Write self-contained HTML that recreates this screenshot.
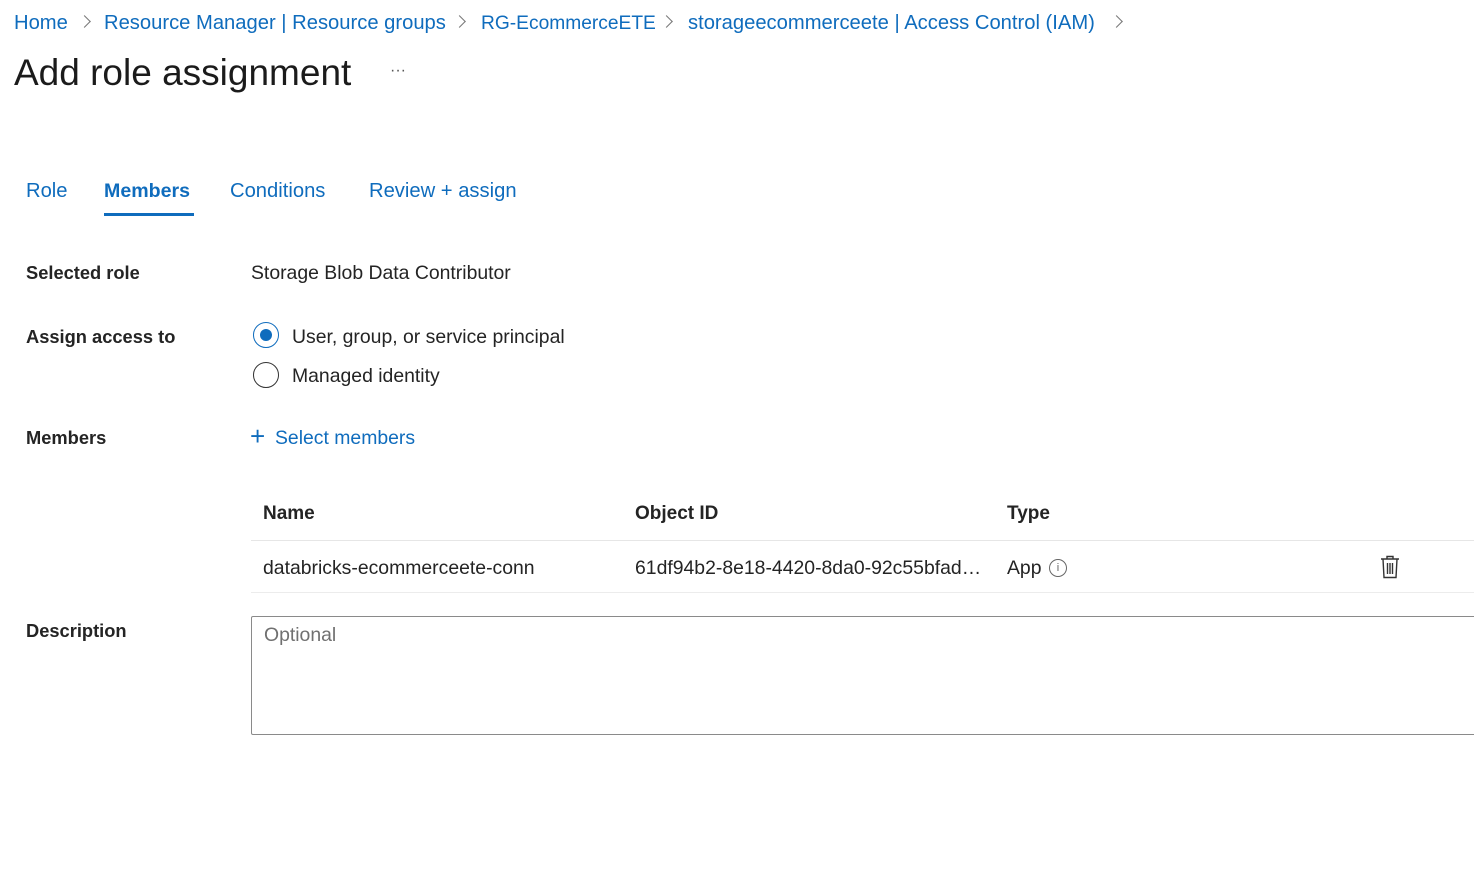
<!DOCTYPE html>
<html><head><meta charset="utf-8"><style>
*{margin:0;padding:0;box-sizing:border-box}
body{width:1474px;height:895px;background:#fff;font-family:"Liberation Sans",sans-serif;color:#242424;position:relative;overflow:hidden}
.a{position:absolute;white-space:nowrap}
.bl{color:#0f6cbd}
.bc{font-size:20.2px;top:12px;color:#0f6cbd}
.sep{position:absolute;top:17px;width:9px;height:9px;border-right:1.4px solid #777;border-top:1.4px solid #777;transform:rotate(45deg)}
.lab{font-size:18.3px;font-weight:bold;left:26px}
.t{font-size:19.4px}
.tab{font-size:20.2px;top:180px}
</style></head><body>
<div class="a bc" style="left:14px">Home</div><div class="sep" style="left:80px"></div>
<div class="a bc" style="left:104px">Resource Manager | Resource groups</div><div class="sep" style="left:455px"></div>
<div class="a bc" style="left:481px;font-size:19.2px;top:13px">RG-EcommerceETE</div><div class="sep" style="left:662px"></div>
<div class="a bc" style="left:688px">storageecommerceete | Access Control (IAM)</div><div class="sep" style="left:1112px"></div>
<div class="a" style="left:14px;top:52px;font-size:37px;color:#1b1b1b">Add role assignment</div>
<div class="a" style="left:390px;top:62px;font-size:16px;color:#555">···</div>

<div class="a bl tab" style="left:26px">Role</div>
<div class="a bl tab" style="left:104px;font-weight:bold;font-size:19.6px">Members</div>
<div class="a" style="left:104px;top:213px;width:90px;height:3px;background:#0f6cbd"></div>
<div class="a bl tab" style="left:230px">Conditions</div>
<div class="a bl tab" style="left:369px">Review + assign</div>

<div class="a lab" style="top:262px">Selected role</div>
<div class="a t" style="left:251px;top:262px">Storage Blob Data Contributor</div>
<div class="a lab" style="top:326px">Assign access to</div>
<div class="a" style="left:253px;top:322px;width:26px;height:26px;border:1.5px solid #0f6cbd;border-radius:50%"></div>
<div class="a" style="left:260px;top:329px;width:12px;height:12px;background:#0f6cbd;border-radius:50%"></div>
<div class="a t" style="left:292px;top:326px">User, group, or service principal</div>
<div class="a" style="left:253px;top:362px;width:26px;height:26px;border:1.5px solid #333;border-radius:50%"></div>
<div class="a t" style="left:292px;top:365px">Managed identity</div>
<div class="a lab" style="top:427px">Members</div>
<div class="a bl" style="left:250px;top:421px;font-size:26px;font-weight:300">+</div>
<div class="a bl t" style="left:275px;top:427px">Select members</div>

<div class="a t" style="left:263px;top:503px;font-weight:bold;font-size:19px">Name</div>
<div class="a t" style="left:635px;top:503px;font-weight:bold;font-size:19px">Object ID</div>
<div class="a t" style="left:1007px;top:503px;font-weight:bold;font-size:19px">Type</div>
<div class="a" style="left:251px;top:540px;width:1223px;height:1px;background:#e6e6e6"></div>
<div class="a t" style="left:263px;top:557px">databricks-ecommerceete-conn</div>
<div class="a t" style="left:635px;top:557px;width:356px;overflow:hidden;text-overflow:ellipsis">61df94b2-8e18-4420-8da0-92c55bfad8d1</div>
<div class="a t" style="left:1007px;top:557px">App</div>
<div class="a" style="left:1049px;top:559px;width:18px;height:18px;border:1.3px solid #666;border-radius:50%;font-size:11px;color:#666;text-align:center;line-height:16px">i</div>
<svg class="a" style="left:1380px;top:555px" width="20" height="24" viewBox="0 0 20 24" fill="none" stroke="#333" stroke-width="1.4"><path d="M1 4h18M7 4V1.5h6V4M3 4l1 18.5h12L17 4M7.5 8v11M10 8v11M12.5 8v11"/></svg>
<div class="a" style="left:251px;top:592px;width:1223px;height:1px;background:#ececec"></div>

<div class="a lab" style="top:620px">Description</div>
<div class="a" style="left:251px;top:616px;width:1240px;height:119px;border:1px solid #8a8a8a;border-radius:2px"></div>
<div class="a t" style="left:264px;top:624px;color:#707070">Optional</div>
</body></html>
